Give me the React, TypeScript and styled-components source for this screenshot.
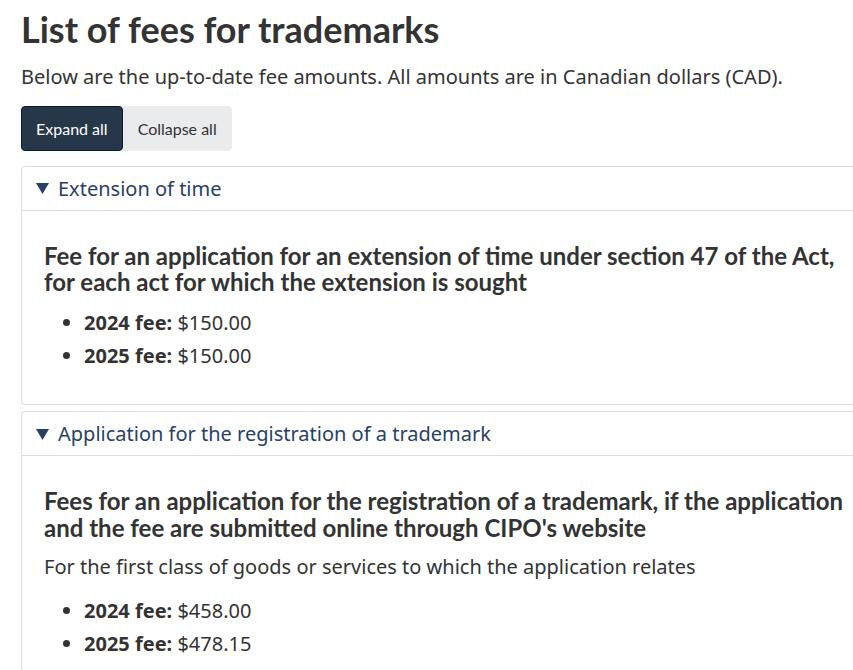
import React from "react";
import styled, { createGlobalStyle } from "styled-components";

const Global = createGlobalStyle`
  html, body { margin: 0; padding: 0; background: #fff; }
  body { font-family: "Noto Sans", sans-serif; color: #333; overflow: hidden; }
`;

const Page = styled.main`
  padding: 0 0 0 21px;
  width: 900px;
`;

const Title = styled.h1`
  font-family: Lato, sans-serif;
  font-weight: 700;
  font-size: 36px;
  line-height: 1.1;
  margin: 10px 0 0;
  color: #333;
`;

const Lead = styled.p`
  font-size: 20px;
  line-height: 1.5;
  margin: 12px 0 14px;
`;

const Toolbar = styled.div`
  display: flex;
  margin-bottom: 15px;
`;

const Button = styled.button<{ $primary?: boolean }>`
  font-family: Lato, sans-serif;
  font-size: 16px;
  height: 45px;
  padding: 0 14px;
  cursor: pointer;
  border: 1px solid ${(p) => (p.$primary ? "#091c2d" : "#eaebed")};
  background: ${(p) => (p.$primary ? "#26374a" : "#eaebed")};
  color: ${(p) => (p.$primary ? "#fff" : "#333")};
  border-radius: ${(p) => (p.$primary ? "4px" : "0 4px 4px 0")};
`;

const Panel = styled.details`
  border: 1px solid #ddd;
  border-right: none;
  border-radius: 4px 0 0 4px;
  margin-bottom: 6px;
`;

const Summary = styled.summary`
  list-style: none;
  display: flex;
  align-items: center;
  gap: 9px;
  height: 43px;
  padding: 0 14px;
  color: #284162;
  font-size: 20px;
  border-bottom: 1px solid #ddd;
  cursor: pointer;
  &::-webkit-details-marker { display: none; }
`;

const Caret = styled.svg`
  width: 13px;
  height: 11px;
  flex: none;
  margin-top: 1px;
`;

const Body = styled.div<{ $bottom: number }>`
  padding: 32px 22px ${(p) => p.$bottom}px;
`;

const Heading = styled.h3`
  font-family: Lato, sans-serif;
  font-weight: 700;
  font-size: 24px;
  line-height: 1.1;
  margin: 0 0 11px;
  color: #333;
`;

const Note = styled.p`
  font-size: 20px;
  line-height: 1.5;
  margin: 5px 0 12px;
`;

const List = styled.ul`
  margin: 0;
  padding-left: 40px;
  font-size: 20px;
  line-height: 33px;
`;

const Strong = styled.strong`
  font-weight: 700;
`;

const Triangle = () => (
  <Caret viewBox="0 0 13 11" aria-hidden="true">
    <path d="M0 0 H13 L6.5 11 Z" fill="#284162" />
  </Caret>
);

export default function App() {
  return (
    <>
      <Global />
      <Page>
        <Title>List of fees for trademarks</Title>
        <Lead>Below are the up-to-date fee amounts. All amounts are in Canadian dollars (CAD).</Lead>
        <Toolbar>
          <Button $primary>Expand all</Button>
          <Button>Collapse all</Button>
        </Toolbar>
        <Panel open>
          <Summary>
            <Triangle />
            Extension of time
          </Summary>
          <Body $bottom={32}>
            <Heading>
              Fee for an application for an extension of time under section 47 of the Act,
              <br />
              for each act for which the extension is sought
            </Heading>
            <List>
              <li><Strong>2024 fee:</Strong> $150.00</li>
              <li><Strong>2025 fee:</Strong> $150.00</li>
            </List>
          </Body>
        </Panel>
        <Panel open>
          <Summary>
            <Triangle />
            Application for the registration of a trademark
          </Summary>
          <Body $bottom={32}>
            <Heading>
              Fees for an application for the registration of a trademark, if the application
              <br />
              and the fee are submitted online through CIPO's website
            </Heading>
            <Note>For the first class of goods or services to which the application relates</Note>
            <List>
              <li><Strong>2024 fee:</Strong> $458.00</li>
              <li><Strong>2025 fee:</Strong> $478.15</li>
            </List>
          </Body>
        </Panel>
      </Page>
    </>
  );
}
